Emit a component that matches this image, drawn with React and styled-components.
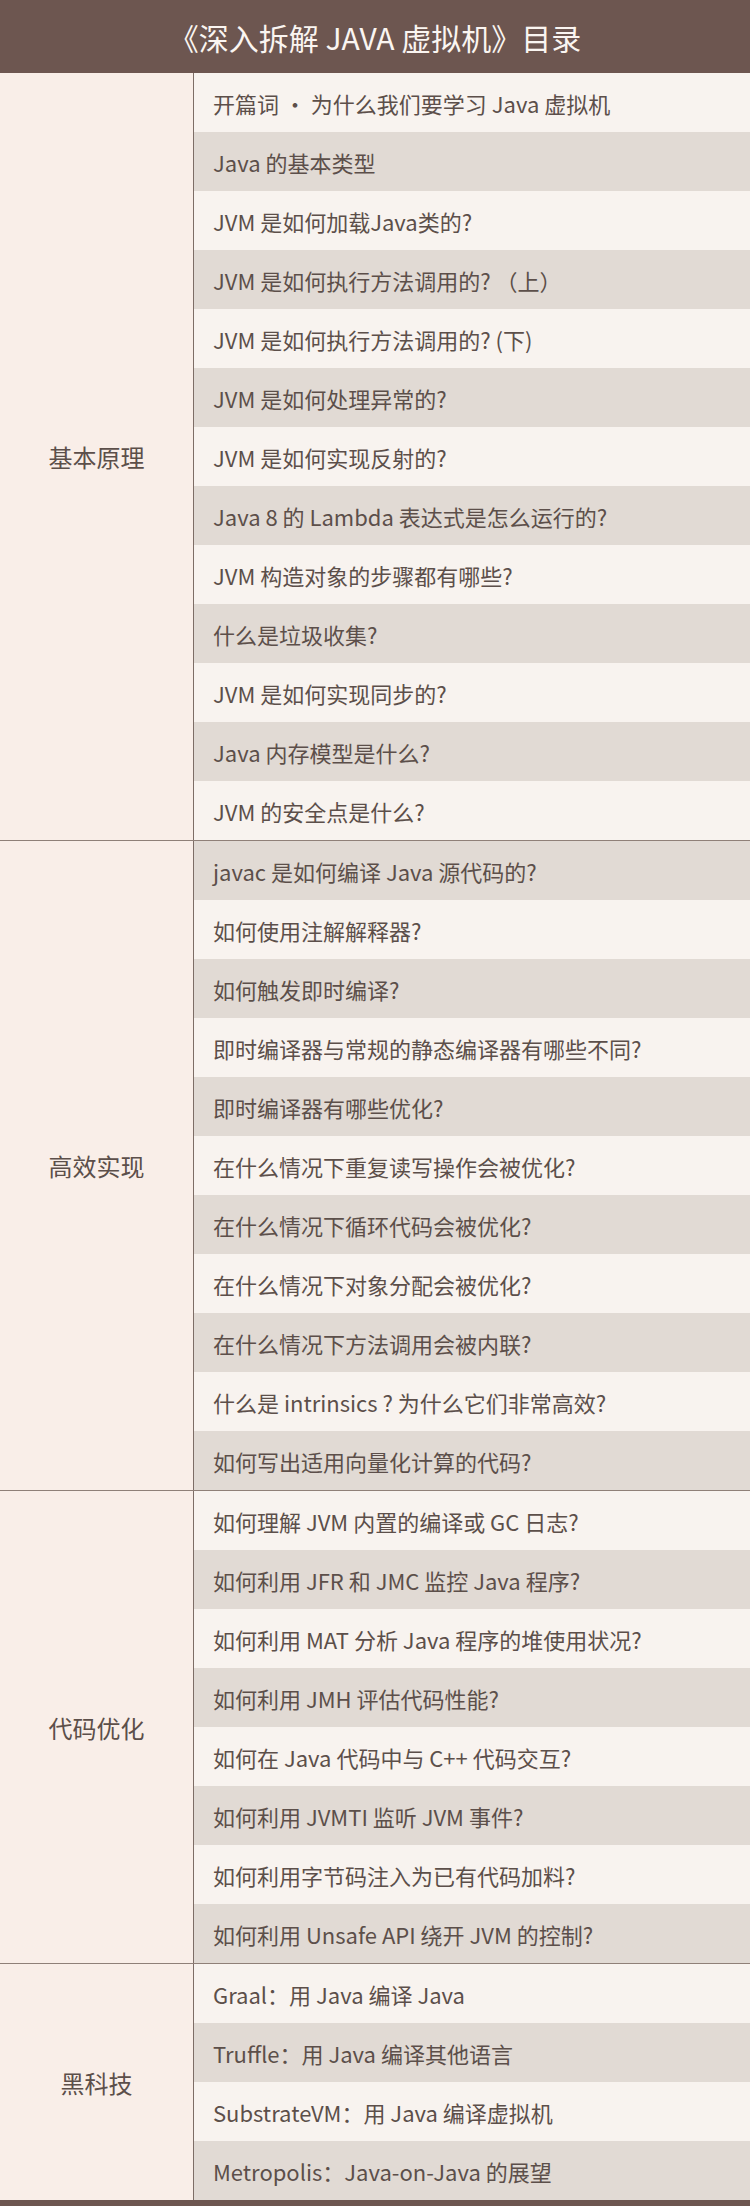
import React from 'react';
import styled, { createGlobalStyle } from 'styled-components';

const GlobalStyle = createGlobalStyle`
  html, body {
    margin: 0;
    padding: 0;
    background: #f8f3ef;
  }
  body {
    font-family: "Noto Sans CJK SC", "Noto Sans", sans-serif;
  }
`;

const Page = styled.div`
  width: 750px;
  display: flex;
  flex-direction: column;
  border-bottom: 7px solid #6d5650;
`;

const Header = styled.header`
  height: 73px;
  background-color: #6d5650;
  color: #faf5f1;
  font-size: 30px;
  display: flex;
  align-items: center;
  justify-content: center;
`;

const Section = styled.section`
  display: flex;
  border-top: ${(p) => (p.first ? 'none' : '1px solid #8f8078')};
`;

const SectionLabel = styled.div`
  width: 193px;
  flex-shrink: 0;
  background-color: #f9eee8;
  border-right: 1px solid #7d6d66;
  display: flex;
  align-items: center;
  justify-content: center;
  font-size: 24px;
  color: #5c4f4a;
`;

const Rows = styled.div`
  flex: 1;
  display: flex;
  flex-direction: column;
`;

const Row = styled.div`
  height: 59px;
  display: flex;
  align-items: center;
  padding-left: 19px;
  font-size: 22px;
  color: #5c4f4a;
  background-color: ${(p) => (p.shade ? '#e1dad4' : '#f8f3ef')};
`;

const sections = [
  {
    label: '基本原理',
    items: [
      '开篇词 · 为什么我们要学习 Java 虚拟机',
      'Java 的基本类型',
      'JVM 是如何加载Java类的?',
      'JVM 是如何执行方法调用的? （上）',
      'JVM 是如何执行方法调用的? (下)',
      'JVM 是如何处理异常的?',
      'JVM 是如何实现反射的?',
      'Java 8 的 Lambda 表达式是怎么运行的?',
      'JVM 构造对象的步骤都有哪些?',
      '什么是垃圾收集?',
      'JVM 是如何实现同步的?',
      'Java 内存模型是什么?',
      'JVM 的安全点是什么?',
    ],
  },
  {
    label: '高效实现',
    items: [
      'javac 是如何编译 Java 源代码的?',
      '如何使用注解解释器?',
      '如何触发即时编译?',
      '即时编译器与常规的静态编译器有哪些不同?',
      '即时编译器有哪些优化?',
      '在什么情况下重复读写操作会被优化?',
      '在什么情况下循环代码会被优化?',
      '在什么情况下对象分配会被优化?',
      '在什么情况下方法调用会被内联?',
      '什么是 intrinsics ? 为什么它们非常高效?',
      '如何写出适用向量化计算的代码?',
    ],
  },
  {
    label: '代码优化',
    items: [
      '如何理解 JVM 内置的编译或 GC 日志?',
      '如何利用 JFR 和 JMC 监控 Java 程序?',
      '如何利用 MAT 分析 Java 程序的堆使用状况?',
      '如何利用 JMH 评估代码性能?',
      '如何在 Java 代码中与 C++ 代码交互?',
      '如何利用 JVMTI 监听 JVM 事件?',
      '如何利用字节码注入为已有代码加料?',
      '如何利用 Unsafe API 绕开 JVM 的控制?',
    ],
  },
  {
    label: '黑科技',
    items: [
      'Graal：用 Java 编译 Java',
      'Truffle：用 Java 编译其他语言',
      'SubstrateVM：用 Java 编译虚拟机',
      'Metropolis：Java-on-Java 的展望',
    ],
  },
];

const App = () => {
  let index = 0;
  return (
    <Page>
      <GlobalStyle />
      <Header>《深入拆解 JAVA 虚拟机》目录</Header>
      {sections.map((section, s) => (
        <Section key={section.label} first={s === 0}>
          <SectionLabel>{section.label}</SectionLabel>
          <Rows>
            {section.items.map((item) => {
              const shade = index % 2 === 1;
              index += 1;
              return (
                <Row key={item} shade={shade}>
                  {item}
                </Row>
              );
            })}
          </Rows>
        </Section>
      ))}
    </Page>
  );
};

export default App;
